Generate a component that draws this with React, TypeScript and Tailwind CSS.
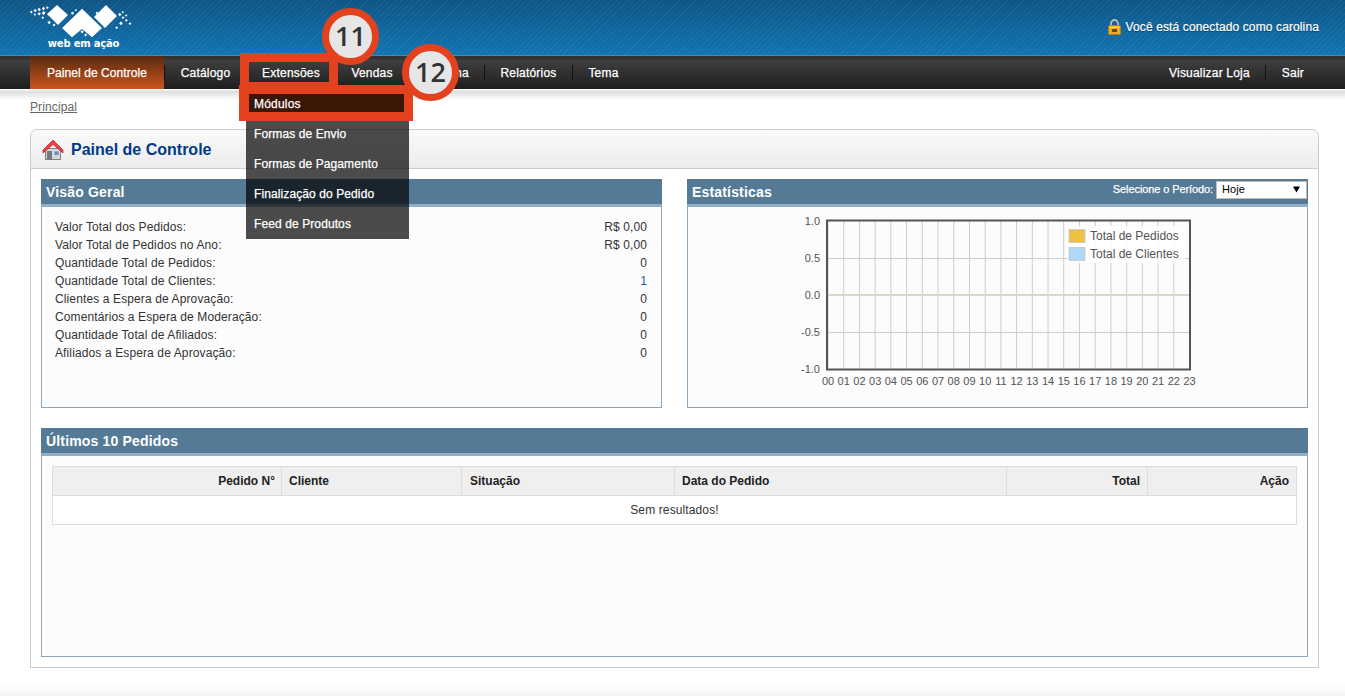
const NAV_LEFT = [
  { label: 'Catálogo', w: 'w-[82px]' },
  { label: 'Extensões', w: 'w-[89px]' },
  { label: 'Vendas', w: 'w-[73px]' },
  { label: 'Sistema', w: 'w-[76px]' },
  { label: 'Relatórios', w: 'w-[88px]' },
  { label: 'Tema', w: 'w-[62px]' },
]

const MENU = ['Módulos', 'Formas de Envio', 'Formas de Pagamento', 'Finalização do Pedido', 'Feed de Produtos']

const RESUMO = [
  { label: 'Valor Total dos Pedidos:', value: 'R$ 0,00' },
  { label: 'Valor Total de Pedidos no Ano:', value: 'R$ 0,00' },
  { label: 'Quantidade Total de Pedidos:', value: '0' },
  { label: 'Quantidade Total de Clientes:', value: '1', link: true },
  { label: 'Clientes a Espera de Aprovação:', value: '0' },
  { label: 'Comentários a Espera de Moderação:', value: '0' },
  { label: 'Quantidade Total de Afiliados:', value: '0' },
  { label: 'Afiliados a Espera de Aprovação:', value: '0' },
]

const COLS = [
  { label: 'Pedido N°', w: 'w-[229px]', align: 'text-right pl-[7px] pr-[6px]' },
  { label: 'Cliente', w: 'w-[180px]', align: 'text-left px-[7px]' },
  { label: 'Situação', w: 'w-[213px]', align: 'text-left pl-[8px] pr-[7px]' },
  { label: 'Data do Pedido', w: 'w-[332px]', align: 'text-left px-[7px]' },
  { label: 'Total', w: 'w-[141px]', align: 'text-right px-[7px]' },
  { label: 'Ação', w: 'w-[149px]', align: 'text-right px-[7px]' },
]

// little squares trailing off both sides of the logo, in zoomed logo units
const LOGO_DOTS = [
  [16, 33, 6], [27, 28, 7], [27, 41, 5], [39, 25, 7], [39, 38, 7], [52, 22, 7], [52, 35, 8], [50, 50, 6],
  [64, 20, 6], [69, 64, 7], [84, 72, 6], [139, 36, 7], [150, 28, 5], [168, 92, 7], [179, 102, 6],
  [281, 40, 7], [291, 34, 5], [291, 50, 6], [301, 44, 5], [301, 58, 6], [312, 68, 6], [284, 66, 8], [272, 80, 6], [213, 36, 6],
]

function Logo() {
  return (
    <svg width="110" height="38" viewBox="0 0 330 114" className="block">
      <g fill="#fff">
        <polygon points="96,15 129,45 99,75 66,42" />
        <polygon points="171,26 231,84 201,112 171,87 141,112 111,84" />
        <polygon points="243,15 276,48 240,84 207,51" />
        {LOGO_DOTS.map(([x, y, s], i) => (
          <rect key={i} x={x} y={y} width={s} height={s} transform={`rotate(45 ${x + s / 2} ${y + s / 2})`} />
        ))}
      </g>
    </svg>
  )
}

function LockIcon() {
  return (
    <svg width="13" height="16" viewBox="0 0 13 16" className="block">
      <path d="M3 7V4.5a3.5 3.5 0 0 1 7 0V7" fill="none" stroke="#b9bdb9" strokeWidth="1.8" />
      <rect x="0.5" y="6.5" width="12" height="9" rx="1" fill="#f2a91f" stroke="#b97a10" />
      <rect x="1.5" y="7.5" width="10" height="1.5" fill="#f9d263" />
      <rect x="4" y="10" width="5" height="3" fill="#6b4a0c" />
    </svg>
  )
}

function HomeIcon() {
  return (
    <svg width="22" height="22" viewBox="0 0 22 22" className="block">
      <rect x="3.5" y="9.5" width="15" height="11" fill="#d6d6d6" stroke="#7f7f7f" />
      <rect x="5" y="12" width="5" height="8.5" fill="#6f7a80" />
      <rect x="12" y="12" width="5" height="4.5" fill="#6c8fc4" stroke="#eee" strokeWidth="0.6" />
      <path d="M11 1 L21 11 L21 14 L11 5.5 L1 14 L1 11 Z" fill="#ee3f44" stroke="#b82226" strokeWidth="0.7" />
    </svg>
  )
}

function PanelHead({ title, children }: { title: string; children?: React.ReactNode }) {
  return (
    <div className="h-[28px] bg-[#547a96] border-b-[3px] border-[#8fb0c6] flex items-start justify-between -mx-px -mt-px">
      <span className="pl-[5px] pt-[5px] text-[14px] leading-[17px] font-bold text-white tracking-[0.17px]">{title}</span>
      {children}
    </div>
  )
}

function Chart() {
  const left = 828
  const step = (1189.5 - 828) / 23
  const hours = Array.from({ length: 24 }, (_, i) => i)
  const ticks = [
    { label: '1.0', y: 221 },
    { label: '0.5', y: 258 },
    { label: '0.0', y: 295 },
    { label: '-0.5', y: 332 },
    { label: '-1.0', y: 369 },
  ]
  return (
    <svg width="400" height="185" viewBox="800 210 400 185" className="block mt-[3px] ml-[112px] font-['Liberation_Sans',sans-serif] tracking-normal">
      {hours.map(h => (
        <line key={h} x1={left + h * step} x2={left + h * step} y1="221" y2="369" stroke="#cdcdcd" />
      ))}
      <line x1="827" x2="1190" y1="258.5" y2="258.5" stroke="#cdcdcd" />
      <line x1="827" x2="1190" y1="332.5" y2="332.5" stroke="#cdcdcd" />
      <line x1="827" x2="1190" y1="295" y2="295" stroke="#d4dacb" strokeWidth="2" />
      <rect x="827" y="220.5" width="363" height="149" fill="none" stroke="#545454" strokeWidth="2" />
      {ticks.map(t => (
        <text key={t.label} x="820" y={t.y + 4} textAnchor="end" fontSize="11" fill="#545454">{t.label}</text>
      ))}
      {hours.map(h => (
        <text key={h} x={left + h * step} y="385" textAnchor="middle" fontSize="11" fill="#545454">
          {String(h).padStart(2, '0')}
        </text>
      ))}
      <rect x="1067" y="226" width="118" height="37" fill="#fff" opacity="0.85" />
      <rect x="1069" y="229.5" width="16" height="13" fill="#edc240" stroke="#ccc" />
      <rect x="1069" y="247.5" width="16" height="13" fill="#afd8f8" stroke="#ccc" />
      <text x="1090" y="240" fontSize="12" fill="#545454">Total de Pedidos</text>
      <text x="1090" y="258" fontSize="12" fill="#545454">Total de Clientes</text>
    </svg>
  )
}

function Badge({ n, className }: { n: string; className: string }) {
  return (
    <div className={`absolute w-[57px] h-[57px] rounded-full border-[7px] border-[#e4421f] bg-[#e6e6e6] flex items-center justify-center text-[27px] font-semibold tracking-normal text-[#333] font-['Open_Sans',sans-serif] ${className}`}>
      {n}
    </div>
  )
}

export default function App() {
  return (
    <div className="relative h-[696px] w-[1345px] overflow-hidden bg-white text-[12px] tracking-[0.12px] text-[#333] font-['Liberation_Sans',sans-serif]">
      <div className="h-[56px] border-b border-[#4a89ad] flex justify-between bg-[repeating-linear-gradient(135deg,rgba(255,255,255,0.05)_0_1px,transparent_1px_4px),linear-gradient(#0f5585,#1174b2)]">
        <div className="ml-[25px] flex flex-col items-center w-[110px]">
          <Logo />
          <span className="pl-[7px] text-[10px] leading-[12px] font-bold text-white tracking-[-0.2px] font-['DejaVu_Sans',sans-serif]">web em ação</span>
        </div>
        <div className="flex items-center gap-[5px] h-[54px] mr-[26px] text-white [-webkit-text-stroke:0.2px_white] [text-shadow:0_1px_1px_rgba(0,0,0,0.4)]">
          <LockIcon />
          <span>Você está conectado como carolina</span>
        </div>
      </div>

      <nav className="h-[33px] flex justify-between pl-[30px] pr-[41px] text-white tracking-[0.2px] [-webkit-text-stroke:0.25px_white] bg-[linear-gradient(#333_0,#333_3px,#3f3f3f_4px,#1e1e1e_100%)]">
        <div className="flex items-center">
          <a className="h-full w-[134px] pt-px flex items-center justify-center tracking-[0.08px] bg-[linear-gradient(#5a2a12,#c9561a)]">Painel de Controle</a>
          {NAV_LEFT.map(item => (
            <a key={item.label} className={`${item.w} h-[15px] leading-[17px] text-center border-l border-[#111]`}>
              {item.label}
            </a>
          ))}
        </div>
        <div className="flex items-center">
          <a className="h-[15px] leading-[17px] pr-[15px]">Visualizar Loja</a>
          <a className="h-[15px] leading-[17px] pl-[16px] border-l border-[#111]">Sair</a>
        </div>
      </nav>

      <div className="h-[40px] pl-[30px] pt-[9px] bg-[linear-gradient(#fff_0,#fff_1px,#dcdcdc_2px,#fff_11px)]">
        <a className="underline text-[#666]">Principal</a>
      </div>

      <div className="ml-[30px] mr-[26px] h-[539px] flex flex-col">
        <div className="h-[40px] shrink-0 pt-px flex items-center gap-[7px] pl-[11px] border border-[#ccc] rounded-t-[7px] bg-[linear-gradient(#fafafa,#ececec)]">
          <HomeIcon />
          <h1 className="text-[16px] font-bold text-[#003a88] tracking-normal">Painel de Controle</h1>
        </div>
        <div className="flex-1 border border-t-0 border-[#ccc] p-[10px] flex flex-col gap-[20px]">
          <div className="grid grid-cols-2 gap-[25px]">
            <section className="h-[229px] border border-[#8ba7bb] bg-[#fcfcfc]">
              <PanelHead title="Visão Geral" />
              <div className="pt-[11px] pl-[13px] pr-[14px]">
                {RESUMO.map(r => (
                  <div key={r.label} className="h-[18px] leading-[18px] flex justify-between">
                    <span>{r.label}</span>
                    <span className={r.link ? 'text-[#1b5ea0]' : ''}>{r.value}</span>
                  </div>
                ))}
              </div>
            </section>
            <section className="h-[229px] border border-[#8ba7bb] bg-[#fcfcfc]">
              <PanelHead title="Estatísticas">
                <div className="flex items-center gap-[3px] h-[19px] mt-px pr-px">
                  <span className="text-[11px] text-white tracking-[-0.1px] [-webkit-text-stroke:0.25px_white]">Selecione o Período:</span>
                  <div className="w-[91px] h-[18px] bg-white border border-[#bbb] flex items-center justify-between pl-[5px] pr-[6px] text-[11px] text-black">
                    <span>Hoje</span>
                    <svg width="7" height="7" viewBox="0 0 7 7"><path d="M0 0.5h7L3.5 6.5z" fill="#000" /></svg>
                  </div>
                </div>
              </PanelHead>
              <Chart />
            </section>
          </div>

          <section className="h-[229px] border border-[#8ba7bb] bg-[#fcfcfc]">
            <PanelHead title="Últimos 10 Pedidos" />
            <div className="pl-[10px] pr-[11px] pt-[10px]">
              <table className="w-full table-fixed border-collapse">
                <thead>
                  <tr className="h-[29px] bg-[#efefef]">
                    {COLS.map(c => (
                      <th key={c.label} className={`${c.w} ${c.align} font-bold text-[#222] tracking-normal border border-[#ddd]`}>{c.label}</th>
                    ))}
                  </tr>
                </thead>
                <tbody>
                  <tr className="h-[29px] bg-white">
                    <td colSpan={6} className="text-center border border-[#ddd]">Sem resultados!</td>
                  </tr>
                </tbody>
              </table>
            </div>
          </section>
        </div>
      </div>

      <div className="absolute bottom-0 inset-x-0 h-[11px] bg-[linear-gradient(#fff,#f3f3f3)]" />

      {/* dropdown open over the page */}
      <div className="absolute left-[246px] top-[89px] w-[163px] h-[150px] bg-black/70 text-white tracking-[0.1px] [-webkit-text-stroke:0.25px_white]">
        {MENU.map(m => (
          <div key={m} className="h-[30px] leading-[30px] pl-[8px]">{m}</div>
        ))}
      </div>

      {/* tutorial highlights */}
      <div className="absolute left-[240px] top-[53px] w-[98px] h-[38px] border-[9px] border-[#e4421f]" />
      <div className="absolute left-[239px] top-[85px] w-[174px] h-[36px] border-[9px] border-l-[10px] border-[#e4421f] bg-[#3b1708] text-white tracking-[0.2px] [-webkit-text-stroke:0.25px_white] leading-[20px] pl-[5px]">
        Módulos
      </div>
      <Badge n="11" className="left-[322px] top-[8px]" />
      <Badge n="12" className="left-[402px] top-[44px]" />
    </div>
  )
}
